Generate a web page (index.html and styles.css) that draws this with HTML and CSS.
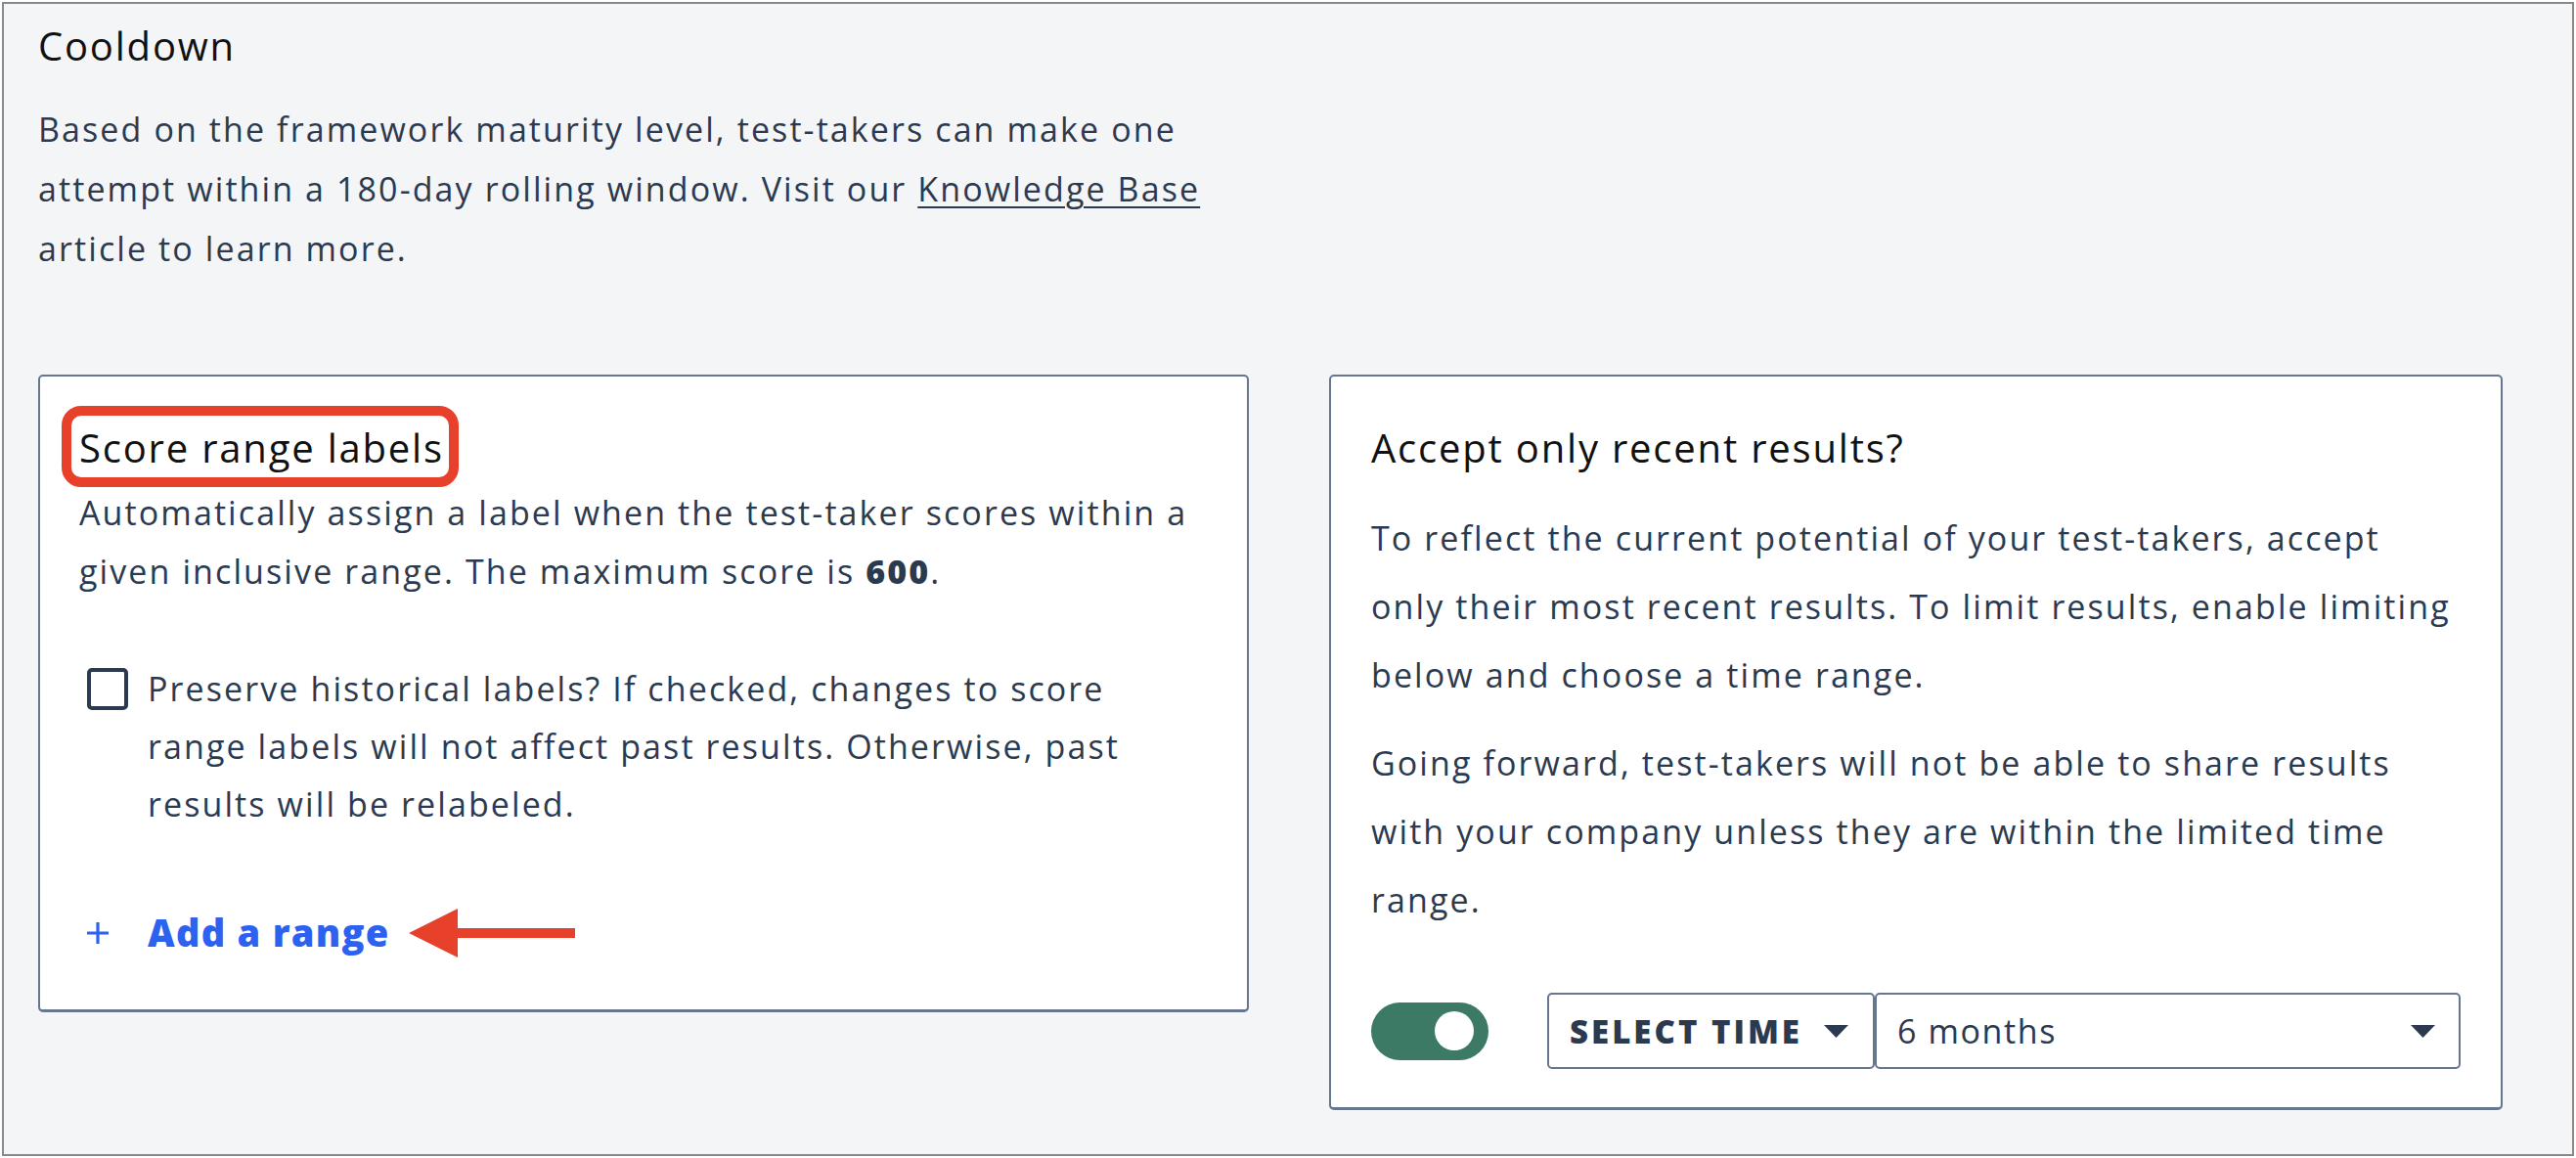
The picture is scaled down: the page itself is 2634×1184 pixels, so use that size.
FILE: index.html
```html
<!DOCTYPE html>
<html>
<head>
	<meta charset="utf-8">
	<meta name="viewport" content="width=device-width, initial-scale=1">
	<title>Cooldown settings</title>
	<link rel="stylesheet" href="styles.css">
</head>
<body>
	<div class="frame">
		<h2 class="section-title">Cooldown</h2>
		<p class="section-text">Based on the framework maturity level, test-takers can make one attempt within a 180-day rolling window. Visit our <a href="#" class="kb-link">Knowledge Base</a> article to learn more.</p>

		<div class="cards">
			<div class="card card-labels">
				<h3 class="card-title"><span class="marked">Score range labels</span></h3>
				<p class="card-desc">Automatically assign a label when the test-taker scores within a given inclusive range. The maximum score is <b>600</b>.</p>
				<label class="check-row">
					<span class="checkbox"></span>
					<span class="check-text">Preserve historical labels? If checked, changes to score range labels will not affect past results. Otherwise, past results will be relabeled.</span>
				</label>
				<div class="add-row">
					<a href="#" class="add-link">
						<svg class="plus" width="24" height="24" viewBox="0 0 24 24"><path d="M12 1v22M1 12h22" stroke="#2d62f0" stroke-width="3.2" fill="none"/></svg>
						<span>Add a range</span>
					</a>
					<svg class="pointer" width="170" height="50" viewBox="0 0 170 50"><polygon points="0,25 50,0 50,20 170,20 170,30 50,30 50,50" fill="#e8412b"/></svg>
				</div>
			</div>

			<div class="card card-recent">
				<h3 class="card-title">Accept only recent results?</h3>
				<p class="recent-text first">To reflect the current potential of your test-takers, accept only their most recent results. To limit results, enable limiting below and choose a time range.</p>
				<p class="recent-text">Going forward, test-takers will not be able to share results with your company unless they are within the limited time range.</p>
				<div class="controls">
					<span class="toggle"><span class="knob"></span></span>
					<div class="select-group">
						<div class="select select-kind">
							<span>SELECT TIME</span>
							<svg width="25" height="13" viewBox="0 0 25 13"><polygon points="0,0 25,0 12.5,13" fill="#2c3a50"/></svg>
						</div>
						<div class="select select-value">
							<span>6 months</span>
							<svg width="25" height="13" viewBox="0 0 25 13"><polygon points="0,0 25,0 12.5,13" fill="#2c3a50"/></svg>
						</div>
					</div>
				</div>
			</div>
		</div>
	</div>
</body>
</html>
```

FILE: styles.css
```css
body{
	margin: 0;
	background-color: #ffffff;
	font-family: "Open Sans", "Noto Sans", sans-serif;
	color: #2c3a50;
}
.frame{
	margin: 2px;
	height: 1180px;
	box-sizing: border-box;
	border: 2px solid #8a8a8a;
	background-color: #f4f5f7;
	padding: 16px 0 0 35px;
}
.section-title{
	margin: 0;
	font-size: 40px;
	line-height: 53px;
	font-weight: 500;
	letter-spacing: 1.8px;
	color: #111111;
}
.section-text{
	margin: 29px 0 0 0;
	max-width: 1250px;
	font-size: 34px;
	line-height: 61px;
	font-weight: 500;
	letter-spacing: 2.1px;
}
.kb-link{
	color: #2c3a50;
	text-decoration: underline;
	text-decoration-thickness: 2px;
	text-underline-offset: 5px;
}
.cards{
	margin-top: 98px;
	display: grid;
	grid-template-columns: 1238px 1200px;
	gap: 82px;
	align-items: start;
}
.card{
	background-color: #ffffff;
	border: 2px solid #66768f;
	border-bottom-width: 3px;
	border-radius: 5px;
	padding: 46px 40px 52px 40px;
}
.card-recent{
	padding: 46px 41px 39px 41px;
}
.card-title{
	margin: 0;
	font-size: 40px;
	line-height: 53px;
	font-weight: 500;
	letter-spacing: 1.8px;
	color: #111111;
}
.marked{
	position: relative;
}
.marked::after{
	content: "";
	position: absolute;
	top: -15px;
	right: -15px;
	bottom: -13px;
	left: -18px;
	border: 10px solid #e8412b;
	border-radius: 20px;
}
.card-desc{
	margin: 10px 0 0 0;
	font-size: 34px;
	line-height: 60px;
	font-weight: 500;
	letter-spacing: 2.1px;
}
.card-desc b{
	font-weight: 800;
}
.check-row{
	margin-top: 61px;
	display: flex;
	align-items: flex-start;
	gap: 20px;
	padding-left: 8px;
}
.checkbox{
	flex: none;
	margin-top: 8px;
	width: 42px;
	height: 43px;
	box-sizing: border-box;
	border: 4px solid #2c3a50;
	border-radius: 5px;
}
.check-text{
	font-size: 34px;
	line-height: 59px;
	font-weight: 500;
	letter-spacing: 2.1px;
}
.add-row{
	margin-top: 75px;
	display: flex;
	align-items: center;
	height: 53px;
}
.add-link{
	display: flex;
	align-items: center;
	gap: 39px;
	padding-left: 7px;
	color: #2d62f0;
	text-decoration: none;
	font-size: 38px;
	line-height: 53px;
	font-weight: 800;
	letter-spacing: 1.3px;
}
.plus{
	flex: none;
}
.pointer{
	margin-left: 19px;
	flex: none;
}
.recent-text{
	margin: 20px 0 0 0;
	max-width: 1108px;
	font-size: 34px;
	line-height: 70px;
	font-weight: 500;
	letter-spacing: 2.1px;
}
.recent-text.first{
	margin-top: 31px;
}
.controls{
	margin-top: 60px;
	display: flex;
	align-items: center;
	gap: 60px;
}
.toggle{
	flex: none;
	width: 120px;
	height: 59px;
	box-sizing: border-box;
	border-radius: 30px;
	background-color: #3c7a65;
	display: flex;
	align-items: center;
	justify-content: flex-end;
	padding-right: 15px;
}
.knob{
	width: 40px;
	height: 40px;
	border-radius: 50%;
	background-color: #ffffff;
}
.select-group{
	flex: 1;
	display: flex;
}
.select{
	height: 78px;
	box-sizing: border-box;
	border: 2px solid #66768f;
	border-radius: 5px;
	display: flex;
	align-items: center;
	justify-content: space-between;
	padding: 0 25px 0 21px;
	font-size: 34px;
	letter-spacing: 1.6px;
}
.select-kind{
	width: 335px;
	flex: none;
	font-size: 33px;
	font-weight: 800;
	letter-spacing: 3px;
}
.select-value{
	flex: 1;
	font-weight: 500;
	padding-right: 24px;
}
```
